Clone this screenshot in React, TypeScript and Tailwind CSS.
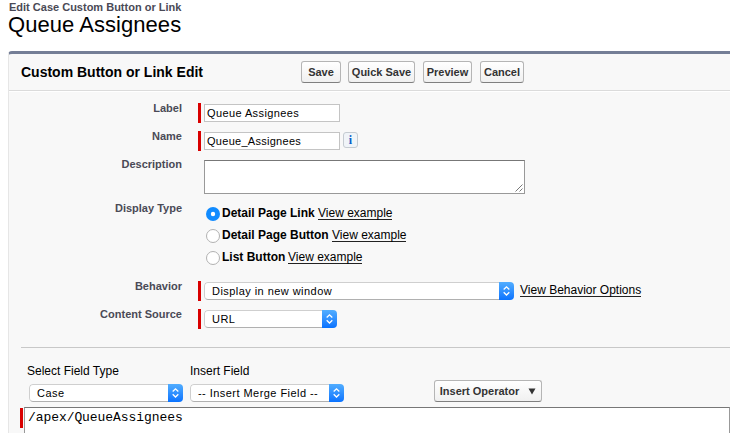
import type { ReactNode } from "react";

const fontStack = "font-['Liberation_Sans',Arial,sans-serif]";

function ToolbarButton({ className, children }: { className: string; children: ReactNode }) {
  return (
    <button
      className={`flex h-[22px] items-center justify-center whitespace-nowrap rounded-[3px] border border-[#b5b5b5] border-b-[#7f7f7f] bg-gradient-to-b from-white to-[#f0f0f0] text-[11px] font-bold leading-[20px] text-[#333] ${className}`}
    >
      {children}
    </button>
  );
}

function FieldRow({
  label,
  className = "h-7",
  required = false,
  children,
}: {
  label: string;
  className?: string;
  required?: boolean;
  children: ReactNode;
}) {
  return (
    <div className={`flex items-start ${className}`}>
      <div className="w-[173px] shrink-0 whitespace-nowrap text-right text-[11px] font-bold leading-[11px] text-[#4a4a56]">
        {label}
      </div>
      <div className={`ml-4 mr-[3px] h-5 w-[3px] shrink-0 ${required ? "bg-[#d90000]" : ""}`} />
      {children}
    </div>
  );
}

function TextBox({ value, className }: { value: string; className: string }) {
  return (
    <div
      className={`mt-px flex h-[18px] w-[136px] items-center whitespace-nowrap border border-[#c4c4c4] bg-white pl-[2px] text-[11px] ${className}`}
    >
      {value}
    </div>
  );
}

function Select({ value, className }: { value: string; className: string }) {
  return (
    <div className={`flex h-[18px] shrink-0 items-stretch overflow-hidden rounded-[4px] ${className}`}>
      <div className="flex flex-1 items-center whitespace-nowrap rounded-l-[4px] border border-r-0 border-[#cfcfcf] border-b-[#b0b0b0] bg-white pl-[7px] text-[11px] tracking-[0.45px]">
        {value}
      </div>
      <div className="flex w-[15px] items-center justify-center bg-gradient-to-b from-[#51adff] to-[#0872ff]">
        <svg width="9" height="12" viewBox="0 0 9 12" fill="none" stroke="white" strokeWidth="1.3">
          <path d="M1.7 4.5 4.5 1.8l2.8 2.7M1.7 7.3l2.8 2.7 2.8-2.7" />
        </svg>
      </div>
    </div>
  );
}

function RadioOption({ label, checked = false, labelClass }: { label: string; checked?: boolean; labelClass: string }) {
  return (
    <div className="flex h-[22px] items-start">
      <svg className="mt-[2px] shrink-0" width="16" height="16" viewBox="0 0 16 16">
        {checked ? (
          <>
            <circle cx="8" cy="8" r="7" fill="#118bff" />
            <circle cx="8" cy="8" r="2.2" fill="white" />
          </>
        ) : (
          <circle cx="8" cy="8" r="6.5" fill="white" stroke="#b2b2b2" />
        )}
      </svg>
      <span className={`ml-px whitespace-nowrap text-[12px] font-bold leading-[18px] ${labelClass}`}>{label}</span>
      <Link className="ml-[3px] mt-[2px]">View example</Link>
    </div>
  );
}

function Link({ className, children }: { className: string; children: ReactNode }) {
  return (
    <a className={`h-[14px] whitespace-nowrap border-b border-[#222] text-[12px] leading-[14px] text-black ${className}`}>
      {children}
    </a>
  );
}

export default function App() {
  return (
    <main className={`h-[433px] w-[730px] overflow-hidden bg-white text-black ${fontStack}`}>
      <header className="h-[51px] pl-[9px]">
        <div className="h-[13px] pt-px text-[11px] font-bold leading-[13px] text-[#4a4a56]">Edit Case Custom Button or Link</div>
        <h1 className="-ml-px text-[22px] leading-[24px] tracking-[0.05px]">Queue Assignees</h1>
      </header>

      <section className="ml-2 h-[382px] rounded-tl-[4px] border-l border-t-[3px] border-l-[#e6e6e6] border-t-[#747e96] bg-[#f8f8f8]">
        <div className="flex h-[37px] items-start border-b border-[#dbdbdb] pl-3 pt-[7px]">
          <h2 className="w-[280px] whitespace-nowrap text-[14px] font-bold leading-[22px]">Custom Button or Link Edit</h2>
          <ToolbarButton className="w-10">Save</ToolbarButton>
          <ToolbarButton className="ml-[7px] w-[67px]">Quick Save</ToolbarButton>
          <ToolbarButton className="ml-2 w-[49px]">Preview</ToolbarButton>
          <ToolbarButton className="ml-2 w-11">Cancel</ToolbarButton>
        </div>

        <div className="h-[256px] border-t border-white pt-[11px]">
          <FieldRow label="Label" required>
            <TextBox value="Queue Assignees" className="tracking-[0.4px]" />
          </FieldRow>
          <FieldRow label="Name" required>
            <TextBox value="Queue_Assignees" className="tracking-[0.28px]" />
            <span className="ml-[3px] mt-px flex h-4 w-[15px] items-center justify-center rounded-[3px] border border-[#c5cbd1] bg-[#f0f4f8] font-['Liberation_Serif',serif] text-[12px] font-bold leading-none text-[#0b60c8]">
              i
            </span>
          </FieldRow>
          <FieldRow label="Description" className="h-11">
            <div className="mt-px flex h-[34px] w-[321px] items-end justify-end border border-[#999] border-t-[#777] bg-white p-px">
              <svg width="8" height="8" viewBox="0 0 8 8" stroke="#555" strokeWidth="0.8">
                <path d="M0.5 7.5l7-7M4.5 7.5l3-3" />
              </svg>
            </div>
          </FieldRow>
          <FieldRow label="Display Type" className="h-[78px]">
            <div className="pl-px pt-px">
              <RadioOption label="Detail Page Link" labelClass="w-[93px]" checked />
              <RadioOption label="Detail Page Button" labelClass="w-[107px]" />
              <RadioOption label="List Button" labelClass="w-[63px]" />
            </div>
          </FieldRow>
          <FieldRow label="Behavior" required>
            <Select value="Display in new window" className="mt-px w-[310px]" />
            <Link className="ml-[6px] mt-[2px]">View Behavior Options</Link>
          </FieldRow>
          <FieldRow label="Content Source" required>
            <Select value="URL" className="mt-px w-[133px]" />
          </FieldRow>
        </div>

        <div className="ml-3 h-[60px] border-t border-[#c8c8c8]">
          <div className="flex items-start pl-[6px] pt-4">
            <div className="w-[163px]">
              <div className="h-5 text-[12px] leading-[14px]">Select Field Type</div>
              <Select value="Case" className="ml-[2px] w-[154px]" />
            </div>
            <div className="w-[244px]">
              <div className="h-5 text-[12px] leading-[14px]">Insert Field</div>
              <Select value="-- Insert Merge Field --" className="w-[154px]" />
            </div>
            <ToolbarButton className="mt-4 w-[108px]">
              Insert Operator
              <svg className="ml-[9px]" width="8" height="7" viewBox="0 0 8 7">
                <path d="M0.5 0.5h7L4 6.5z" fill="#333" />
              </svg>
            </ToolbarButton>
          </div>
        </div>
        <div className="ml-[11px] flex h-[26px]">
          <div className="mt-px h-5 w-[3px] bg-[#d90000]" />
          <div className="ml-px flex-1 border-l border-r border-t border-[#999] border-t-[#777] bg-white pl-[3px] pt-[2px] font-['Liberation_Mono','Courier_New',monospace] text-[13px] leading-[16px] tracking-[-0.07px]">
            /apex/QueueAssignees
          </div>
        </div>
      </section>
    </main>
  );
}
